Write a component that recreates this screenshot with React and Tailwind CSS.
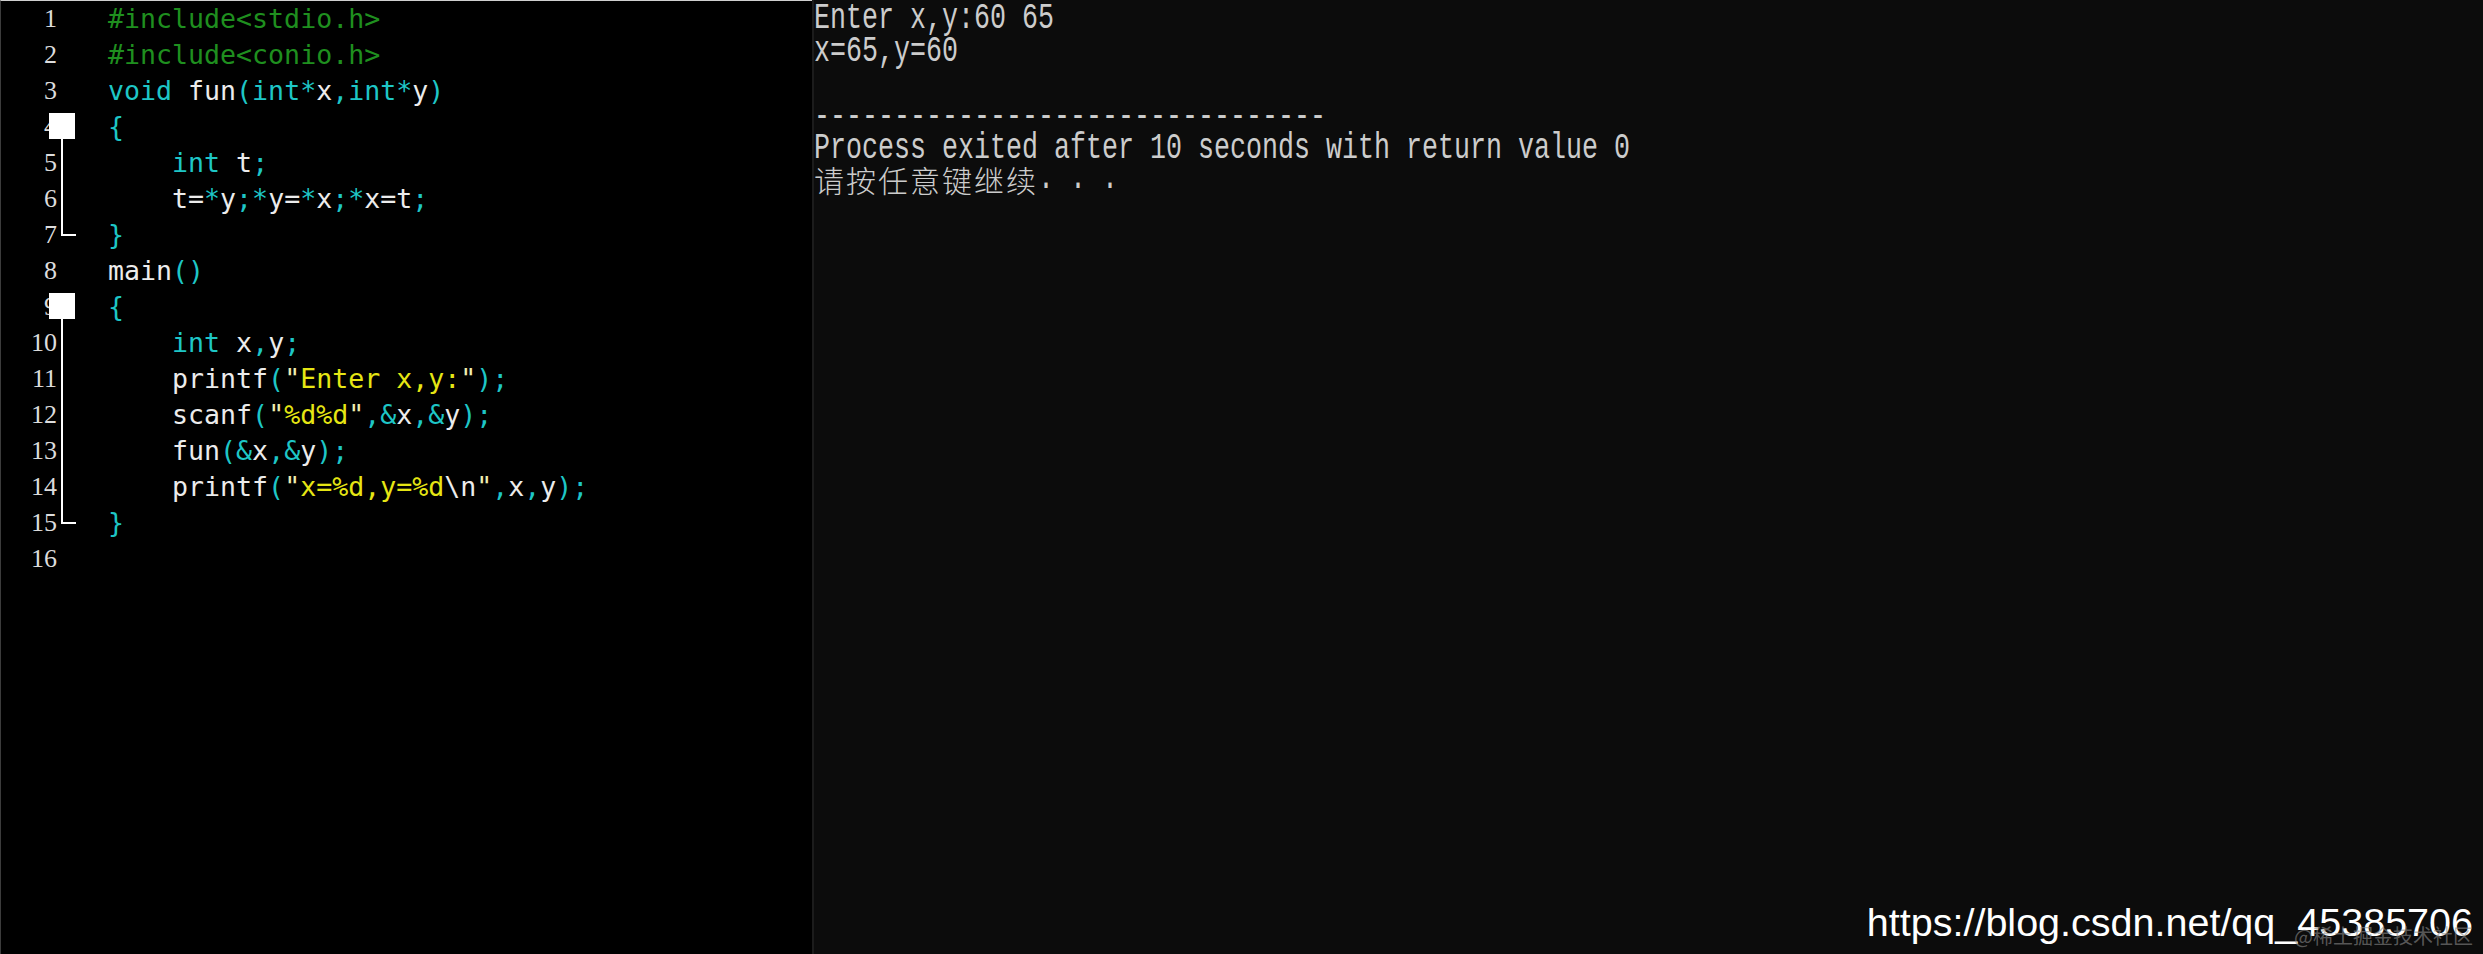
import React from "react";

const C = "text-[#1ec6c6]";
const W = "text-[#ececec]";
const G = "text-[#1f8f1f]";
const Y = "text-[#e6e614]";
const Q = "text-[#f0f0b0]";

const code = [
  [[G, "#include<stdio.h>"]],
  [[G, "#include<conio.h>"]],
  [[C, "void"], [W, " fun"], [C, "(int*"], [W, "x"], [C, ",int*"], [W, "y"], [C, ")"]],
  [[C, "{"]],
  [[W, "    "], [C, "int"], [W, " t"], [C, ";"]],
  [[W, "    t="], [C, "*"], [W, "y"], [C, ";*"], [W, "y="], [C, "*"], [W, "x"], [C, ";*"], [W, "x=t"], [C, ";"]],
  [[C, "}"]],
  [[W, "main"], [C, "()"]],
  [[C, "{"]],
  [[W, "    "], [C, "int"], [W, " x"], [C, ","], [W, "y"], [C, ";"]],
  [[W, "    printf"], [C, "("], [Q, "\""], [Y, "Enter x,y:"], [Q, "\""], [C, ");"]],
  [[W, "    scanf"], [C, "("], [Q, "\""], [Y, "%d%d"], [Q, "\""], [C, ",&"], [W, "x"], [C, ",&"], [W, "y"], [C, ");"]],
  [[W, "    fun"], [C, "(&"], [W, "x"], [C, ",&"], [W, "y"], [C, ");"]],
  [[W, "    printf"], [C, "("], [Q, "\""], [Y, "x=%d,y=%d"], [W, "\\n"], [Q, "\""], [C, ","], [W, "x"], [C, ","], [W, "y"], [C, ");"]],
  [[C, "}"]],
  [],
];

// fold marker per line: s = start, m = middle, e = end
const folds = { 4: "s", 5: "m", 6: "m", 7: "e", 9: "s", 10: "m", 11: "m", 12: "m", 13: "m", 14: "m", 15: "e" };

function Fold({ kind }) {
  if (!kind) return null;
  if (kind === "s")
    return (
      <>
        <div className="absolute left-[48px] top-[4px] w-[26px] h-[26px] bg-white" />
        <div className="absolute left-[60px] top-[30px] w-[2px] h-[6px] bg-white" />
      </>
    );
  if (kind === "m") return <div className="absolute left-[60px] top-0 w-[2px] h-[36px] bg-white" />;
  return (
    <>
      <div className="absolute left-[60px] top-0 w-[2px] h-[19px] bg-white" />
      <div className="absolute left-[60px] top-[17px] w-[15px] h-[2px] bg-white" />
    </>
  );
}

function ConsoleLine({ children }) {
  return (
    <div className="h-[32.6px] leading-[32.6px] whitespace-pre overflow-visible">
      <span className="inline-block origin-left scale-x-[0.7407] text-[36px] font-['Liberation_Mono',monospace]">
        {children}
      </span>
    </div>
  );
}

export default function App() {
  return (
    <div className="relative flex w-[2483px] h-[954px] overflow-hidden bg-black">
      {/* Editor */}
      <div className="w-[812px] h-full shrink-0 bg-black border-l border-t border-l-[#3c3c3c] border-t-[#cfcfcf]">
        {code.map((line, i) => (
          <div key={i} className="flex h-[36px] items-center">
            <div className="relative w-[107px] h-full shrink-0 flex items-center">
              <div className="w-[56px] text-right text-[26px] leading-[36px] text-[#dcdcdc] font-['Liberation_Serif',serif]">
                {i + 1}
              </div>
              <Fold kind={folds[i + 1]} />
            </div>
            <div className="whitespace-pre text-[26.6px] leading-[36px] font-['DejaVu_Sans_Mono',monospace]">
              {line.map(([cls, t], j) => (
                <span key={j} className={cls}>
                  {t}
                </span>
              ))}
            </div>
          </div>
        ))}
      </div>

      {/* Console */}
      <div className="flex-1 h-full bg-[#0c0c0c] border-l-2 border-[#1c1c1c] text-[#cccccc]">
        <div className="pt-[3px]">
          <ConsoleLine>Enter x,y:60 65</ConsoleLine>
          <ConsoleLine>x=65,y=60</ConsoleLine>
          <ConsoleLine> </ConsoleLine>
          <ConsoleLine>--------------------------------</ConsoleLine>
          <ConsoleLine>Process exited after 10 seconds with return value 0</ConsoleLine>
        </div>
        <div className="flex h-[32.6px] mt-[-3px] items-center whitespace-pre">
          <span className="text-[30px] leading-[32.6px] tracking-[2px] font-['Noto_Sans_CJK_SC',sans-serif] font-light">
            请按任意键继续
          </span>
          <span className="inline-block origin-left scale-x-[0.7407] text-[36px] leading-[32.6px] font-['Liberation_Mono',monospace]">
            . . .
          </span>
        </div>
      </div>

      {/* Watermark */}
      <div className="absolute right-[10px] bottom-[12px] text-[39.5px] leading-[40px] text-white font-['Liberation_Sans',sans-serif]">
        https://blog.csdn.net/qq_45385706
      </div>
      <div className="absolute right-[10px] bottom-[8px] text-[20px] leading-[20px] text-[#8a8a8a]/60 font-['Noto_Sans_CJK_SC',sans-serif]">
        @稀土掘金技术社区
      </div>
    </div>
  );
}
